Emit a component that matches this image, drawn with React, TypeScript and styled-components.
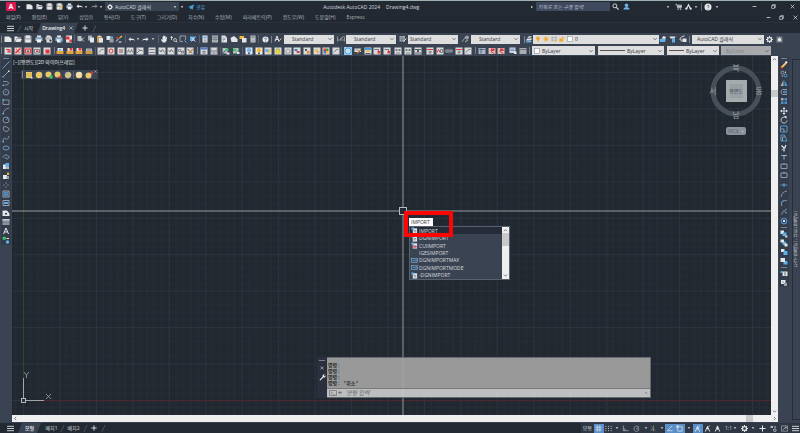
import React from 'react';
import styled, { createGlobalStyle, css } from 'styled-components';

const color = {
  title: '#222933',
  bar: '#3a4352',
  strip: '#333c4a',
  canvas: '#212830',
  text: '#d6dade',
  dim: '#aeb3ba',
  field: '#dedede',
  blue: '#5b8fca',
};

const GlobalStyle = createGlobalStyle`
  * { box-sizing: border-box; }
  html, body { margin: 0; padding: 0; overflow: hidden; background: ${color.title}; }
  body, button, input, select {
    font-family: "Open Sans", "Noto Sans CJK KR", sans-serif;
    font-size: 5px;
    line-height: 8px;
  }
  button, input, select { margin: 0; padding: 0; border: 0; background: none; color: inherit; border-radius: 0; min-width: 0; }
  button { cursor: pointer; }
  svg { display: block; }
`;

/* ---------- icon drawings, all on a 16 x 16 grid ---------- */

const W = '#e4e6e8';
const B = '#5fb0ea';
const R = '#e0383c';
const Y = '#f2ba3a';
const G = '#3fbf6a';
const K = '#555b64';
const GOLD = '#e6c869';

const line = (d: string, stroke = W, width = 1.6) => (
  <path d={d} fill="none" stroke={stroke} strokeWidth={width} />
);
const box = (x: number, y: number, w: number, h: number, fill = W) => (
  <rect x={x} y={y} width={w} height={h} fill={fill} />
);
const tile = (accent: React.ReactNode, fill = '#d9dadb') => (
  <>
    {box(1, 1, 14, 14, fill)}
    {accent}
  </>
);
const folder = <path d="M1 3h5l2 2h6v2H5l-3 7H1zM5 8h11l-3 6H3z" fill={W} />;
const page = <path d="M3 1h7l4 4v10H3z" fill={W} />;
const disk = (
  <>
    <path d="M1 1h12l2 2v12H1z" fill="#a9adb3" />
    {box(4, 1, 8, 5)}
    {box(3, 9, 10, 6)}
  </>
);
const printer = (
  <>
    {box(4, 1, 8, 4)}
    <path d="M1 5h14v7H1z" fill="#b9bdc2" />
    {box(4, 9, 8, 6, '#f4f4f4')}
    {box(3, 6, 10, 2, B)}
  </>
);

const glyphs: Record<string, React.ReactNode> = {
  new: <path d="M1 3h9l5 4v7H1z" fill={W} />,
  open: folder,
  save: disk,
  saveas: <>{disk}{line('M8 13l7-7', Y, 3)}</>,
  print: printer,
  preview: <>{page}{box(1, 4, 11, 6, '#b9bdc2')}<circle cx="11" cy="11" r="3" fill="#333c4a" stroke={W} strokeWidth="1.4" /></>,
  publish: <>{printer}{line('M9 12h6M12 9v6', B, 2)}</>,
  pdf: <>{box(2, 1, 12, 14)}{box(1, 3, 8, 6, R)}{box(9, 9, 5, 5, R)}</>,
  cut: <>{box(1, 2, 8, 10, '#b9bdc2')}{line('M6 5l8 8M14 5l-8 8')}</>,
  copy: <>{box(2, 1, 8, 10, '#a9adb3')}{box(6, 5, 8, 10)}</>,
  paste: <>{box(2, 2, 10, 13, '#c79a55')}{box(6, 6, 8, 9)}{box(5, 1, 4, 3)}</>,
  block: <>{box(1, 2, 8, 8)}{box(7, 7, 8, 8, '#9aa0a8')}{box(9, 3, 5, 4, B)}</>,
  match: <>{line('M2 13l6-6M7 14h6', W, 2)}{line('M9 6l5-4', Y, 3)}{box(2, 4, 4, 3, R)}</>,
  undo: <path d="M6 3v3h5c3 0 4 2 4 6-1-2-2-3-4-3H6v3L1 7.500z" fill={W} />,
  redo: <path d="M10 3v3H5c-3 0-4 2-4 6 1-2 2-3 4-3h5v3l5-4.500z" fill={W} />,
  pan: <path d="M3 8l2 2V3h2v5V1h2v7V2h2v6l1-4h2l-1 8-3 3H6L2 10z" fill={W} />,
  zoomrt: <>{line('M3 2v8M1 5h5')}<circle cx="10" cy="10" r="3" fill="none" stroke={W} strokeWidth="1.400" />{line('M12 12l3 3')}</>,
  zoomwin: <>{line('M2 2h11v8M2 2v11h6', '#aab0b8')}{line('M11 11l4 4', B, 2)}</>,
  zoomprev: <>{box(2, 3, 9, 9, B)}{line('M5 5l8 8M13 3l-8 10')}</>,
  props: <>{box(3, 1, 10, 14)}{box(5, 3, 6, 4, B)}{line('M5 10h6M5 12.500h6', K, 1)}</>,
  center: <>{box(2, 1, 12, 14, '#b9bdc2')}{line('M2 5h12M2 9h12M6 1v14M10 1v14', K, 1)}</>,
  palette: <>{page}{line('M5 6h6M5 9h6M5 12h3', K, 1)}</>,
  sheet: <path d="M1 6l7-4 7 6v6H3z" fill={W} />,
  markup: <>{box(1, 2, 9, 6, Y)}{box(6, 6, 9, 9)}</>,
  calc: <>{box(3, 1, 10, 14, '#c6c9cd')}{box(5, 3, 6, 2, K)}{line('M5 8h6M5 11h6M5 13h6', '#8b9098', 1)}</>,
  help: <><circle cx="8" cy="8" r="7" fill={W} /><path d="M6 6.500C6 3.500 10.500 4 10 6.500 9.600 8 8 8 8 10M8 11.500v1.500" fill="none" stroke={K} strokeWidth="1.600" /></>,
  textstyle: <>{line('M2 13L6 2l4 11M3.500 9h5', W, 2)}{line('M9 13l6-6', '#c7b99a', 2)}</>,
  dimstyle: <>{line('M1 3v10M15 3v10M1 10h14', '#aab0b8', 1.400)}{line('M6 9l7-6', '#c7b99a', 2)}</>,
  tablestyle: <>{box(1, 2, 11, 11, '#aab0b8')}{line('M1 6h11M1 9.500h11M6 2v11', K, 1)}{line('M9 13l6-6', W, 2)}</>,
  mleader: <>{line('M2 14l6-9h6', '#aab0b8')}<circle cx="12" cy="5" r="3" fill="none" stroke={W} strokeWidth="1.400" />{line('M8 14l6-4', '#c7b99a', 2)}</>,
  layers: <><path d="M1 11l4-4h10l-4 4z" fill={W} /><path d="M1 14l4-2h10l-4 3H1z" fill={B} /><path d="M4 6l4-4h6l-3 4z" fill="#b9bdc2" /></>,
  layerset: <><path d="M5 7l4-5 5 2-2 4z" fill={W} /><path d="M1 8h13l-2 6H2z" fill={B} /></>,
  layerprev: <><path d="M1 3h12l-2 4H3z" fill={W} />{box(6, 7, 6, 8, B)}</>,
  layerstate: <>{line('M2 10c0-5 4-8 9-8', W, 2)}{box(7, 7, 8, 7)}{box(3, 9, 4, 4, '#aab0b8')}</>,
  gear: <><circle cx="8" cy="8" r="4.500" fill="none" stroke={W} strokeWidth="3" /><path d="M8 0v3M8 13v3M0 8h3M13 8h3M2.300 2.300l2 2M11.700 11.700l2 2M13.700 2.300l-2 2M4.300 11.700l-2 2" stroke={W} strokeWidth="2.400" /></>,
  wssave: <>{box(1, 1, 14, 14, '#6f7784')}<path d="M4 7l4-4 4 4v5H4z" fill={W} /></>,
  /* second row */
  redtile: tile(<>{line('M4 5h8v7', R, 2)}{box(7, 7, 4, 4, R)}</>),
  redx: tile(<>{line('M3 12L13 3', R, 3)}{line('M4 4l8 8', R, 1.6)}</>, '#e5c6c6'),
  redbox: tile(<>{line('M3 4h10v8H3z', R, 2)}{box(6, 7, 4, 3, K)}</>, '#e9b9b9'),
  cliptile: tile(<>{line('M3 5h10v7H3z', K, 1.400)}{box(6, 7, 5, 3, R)}</>),
  redfill: tile(box(5, 5, 8, 8, R)),
  gold: <>{box(3, 2, 11, 6)}{box(1, 8, 14, 6, '#e2a33a')}{box(6, 4, 5, 3, B)}</>,
  goldred: <>{box(3, 2, 11, 6)}{box(1, 8, 14, 6, '#e2a33a')}{box(7, 2, 6, 5, R)}</>,
  golddark: <>{box(2, 3, 12, 5, '#b9bdc2')}{box(1, 8, 14, 6, '#d09a42')}{line('M4 6h8', K, 1)}</>,
  doc: tile(line('M4 11l5-6M9 5h4', K, 1.400)),
  circ: tile(<circle cx="8" cy="8" r="4" fill="none" stroke={R} strokeWidth="2" />),
  redi: tile(<>{box(5, 4, 2, 8, R)}{box(9, 4, 2, 8, K)}</>),
  aa: tile(<>{line('M3 11l2-6 2 6M9 11l2-6 2 6', K, 1.400)}</>),
  diag: tile(<>{line('M2 12l5-5h6', K, 1.600)}{line('M3 4l5 2', K, 1)}</>),
  dots: tile(<>{line('M3 5h10M3 11h10', K, 2)}{line('M6 3v10M10 3v10', '#d9dadb', 1)}</>),
  wave: tile(line('M3 6l3 4 3-5 4 6', K, 1.600)),
  gridt: tile(<>{line('M3 5h4v4H3zM9 8h4v4H9z', K, 1.400)}</>),
  brush: tile(<>{line('M3 4l9 9', K, 2)}{line('M6 12l8-8', '#d08a45', 3)}</>),
  blue: tile(<>{box(1, 1, 14, 4, '#4d78c4')}{line('M4 9h8M4 12h8M8 6v8', K, 1)}</>),
  frame: tile(<>{line('M2 3v10M14 3v10M4 8h8M5 12h6', K, 1.600)}</>),
  green: <>{box(1, 2, 10, 11, '#b9bdc2')}{line('M2 12L11 3', K, 2)}{box(7, 3, 6, 5, G)}{box(9, 11, 6, 4)}</>,
  green2: <>{box(2, 2, 11, 11, '#b9bdc2')}{box(2, 3, 6, 5, G)}{line('M6 13l8-8', G, 2)}{box(10, 10, 5, 4)}</>,
  bulb: <>{box(1, 1, 14, 14, '#dce9f7')}<circle cx="8" cy="6.500" r="4.500" fill="#7cb5ec" />{box(6, 11, 4, 3, K)}</>,
  bulbon: <>{box(1, 1, 14, 14, '#ecebe4')}<circle cx="8" cy="6.500" r="4.500" fill={Y} />{box(6, 11, 4, 3, K)}</>,
  iso: tile(<>{box(3, 4, 6, 6, B)}{line('M8 12l6-7', Y, 3)}</>),
  lockt: tile(<>{box(3, 7, 10, 6, '#e5cf2c')}{line('M5 7V4h6v3', '#b8a832', 2)}</>),
  unlockt: tile(<>{line('M4 12V6l4-2 4 2v6z', '#8b9098', 1.600)}</>),
  bluered: tile(<>{box(3, 4, 5, 4, '#4d78c4')}{box(8, 8, 5, 4, R)}{line('M8 4v8', K, 1)}</>),
  orange: tile(<>{box(4, 4, 4, 4, K)}{box(8, 8, 5, 5, '#e58a2b')}</>),
  sunt: tile(<><circle cx="7" cy="7" r="3" fill={Y} />{line('M8 12l5-3', '#e58a2b', 2)}</>),
  rgb: tile(<>{box(3, 3, 5, 5, R)}{box(8, 3, 5, 5, '#3d9a55')}{box(3, 8, 5, 5, '#4d78c4')}{box(8, 8, 5, 5, Y)}</>),
  globe: <>{box(0, 0, 16, 16, '#8fc8f2')}<circle cx="8" cy="8" r="6" fill="#bfe0f5" stroke="#3f7fb8" strokeWidth="1.200" /></>,
  pen: <>{box(1, 3, 13, 7)}{line('M6 13l8-8', '#b0793a', 3)}{line('M3 6h6', K, 1.400)}</>,
  flag: tile(<>{box(1, 2, 14, 4, '#4d9ad8')}{box(4, 7, 8, 3, Y)}{line('M3 13h10', K, 2)}</>),
  tagr: tile(<>{line('M3 5h8v7', K, 1.600)}{box(9, 8, 5, 5, R)}</>),
  dimw: tile(<>{line('M2 6h12M5 4v4M11 4v4M4 12h8', K, 1.400)}</>),
  dimc: tile(<>{line('M2 5h12M2 12h12', K, 2)}{box(6, 6, 4, 4, K)}</>),
  redline: tile(<>{line('M2 5h12', R, 2)}{line('M5 10h7M8 7v7', K, 1.400)}</>),
  redab: tile(<>{line('M2 11l3-6 3 6', R, 2)}{line('M9 5h4v6H9z', K, 1.400)}</>),
  dimh: <>{box(1, 5, 14, 6, '#a9adb3')}{line('M8 1v14M4 6v4M12 6v4', K, 2)}</>,
  ref: <>{box(1, 2, 14, 12, '#aab6c8')}{line('M3 5h10M6 3v10', '#40506a', 1.600)}</>,
  refred: <>{box(1, 2, 14, 12, '#d8c0c0')}{box(6, 3, 7, 5, R)}{line('M5 8l8 6', R, 2)}</>,
  blist: <>{box(1, 1, 12, 11, '#ced7e8')}{line('M3 4h8M3 7h8', '#5573b0', 1.400)}{box(10, 9, 5, 5)}</>,
  bwin: <>{box(1, 2, 14, 12, '#a9adb3')}{line('M1 5h14', K, 1.400)}</>,
  /* drawing tools */
  line1: line('M1 15L15 1', '#7eb4e0'),
  line2: <>{line('M3 13L13 3', '#aab0b8')}{box(1, 12, 3, 3, B)}{box(12, 1, 3, 3)}</>,
  pline: <>{line('M2 5h7c5 0 5 7 0 7H5', '#9aa4b2')}{box(1, 11, 3, 3, B)}</>,
  polygon: <>{line('M8 2l6 4.500-2 7H4l-2-7z', '#9aa4b2')}{box(7, 7, 2, 2, B)}</>,
  rect: <>{line('M2 4h12v9H2z', '#9aa4b2')}{box(1, 2, 3, 3, B)}</>,
  arc: <>{line('M2 14C3 7 7 3 14 2', '#9aa4b2')}{box(1, 12, 3, 3, B)}</>,
  circle: <><circle cx="8" cy="8" r="6" fill="none" stroke="#9aa4b2" strokeWidth="1.600" />{line('M8 8l4-4', B)}</>,
  cloud: line('M3 4c4-3 6 1 8 1 5 1 3 8-3 8C4 13 1 7 3 4z', '#aab0b8'),
  spline: <>{line('M2 13C3-3 10 18 14 2', '#9aa4b2')}{box(1, 12, 3, 3, B)}</>,
  ellipse: <ellipse cx="8" cy="8" rx="6" ry="4" fill="none" stroke="#7eaed6" strokeWidth="1.600" />,
  earc: <>{line('M2 9C1 3 13 2 14 8c0 3-3 4-5 4', '#9aa4b2')}{line('M5 10h5', B)}</>,
  insert: <>{box(2, 5, 7, 9)}{box(7, 2, 7, 8, B)}{box(9, 10, 5, 4, '#b9bdc2')}</>,
  make: <>{box(2, 6, 8, 8)}{box(9, 8, 5, 6, '#9aa0a8')}<circle cx="12" cy="3.500" r="2.500" fill={Y} /></>,
  point: <>{box(7, 3, 2, 2, '#aab0b8')}{box(7, 11, 2, 2, '#aab0b8')}{box(3, 7, 2, 2, '#aab0b8')}{box(11, 7, 2, 2, '#aab0b8')}</>,
  hatch: <>{line('M2 2h12v12H2z', '#9aa4b2', 2)}{box(4, 4, 8, 8, '#4f86b4')}</>,
  gradient: <>{line('M2 3h12v10H2z', '#9aa4b2', 2)}{box(4, 6, 8, 4, B)}</>,
  region: <path d="M1 3h9l5 6v5H1zM6 8v3h4V8z" fill={W} fillRule="evenodd" />,
  table: <>{box(1, 2, 14, 12, '#8d939c')}{box(1, 2, 14, 3, '#c3c8ce')}{line('M1 9h14', '#6a717c', 1)}</>,
  mtext: line('M3 14L8 2l5 12M5 10h6', W, 2),
  addsel: <><circle cx="4.500" cy="4.500" r="3.500" fill={G} /><circle cx="11" cy="12" r="3.500" fill={B} />{box(9, 4, 5, 2)}</>,
  /* modify tools */
  erase: <>{line('M3 13L12 4', '#f0c060', 4)}{line('M11 4l3-3', W, 4)}{box(1, 12, 4, 3, R)}</>,
  copyobj: <><circle cx="5" cy="5" r="3" fill="none" stroke="#aab0b8" strokeWidth="1.600" /><circle cx="11" cy="11" r="3" fill="none" stroke={B} strokeWidth="1.600" />{line('M11 3v3M3 12h3', W)}</>,
  mirror: <><path d="M7 2v12H1z" fill="#aab0b8" /><path d="M9 2v12h6z" fill="#4f92cc" /></>,
  offset: <>{line('M14 3H6c-5 0-5 10 0 10h8', '#aab0b8')}{line('M14 6.500H8c-2 0-2 3 0 3h6', B)}</>,
  array: <>{box(2, 2, 5, 5, '#aab0b8')}{box(9, 2, 5, 5, '#4f92cc')}{box(2, 9, 5, 5, '#4f92cc')}{box(9, 9, 5, 5, '#4f92cc')}</>,
  move: <>{line('M8 2v12M2 8h12', W, 1.600)}<path d="M8 0l3 4H5zM8 16l3-4H5zM0 8l4-3v6zM16 8l-4-3v6z" fill={W} /></>,
  rotate: <>{line('M11 3a6 6 0 1 0 3 6', W)}<path d="M8 0h5v6z" fill={W} /></>,
  scale: <>{line('M1 2h13v12H1z', B)}{line('M1 8h7v6', '#aab0b8')}</>,
  stretch: <>{line('M2 14V2h7l5 12z', B)}{line('M5 14V6h5', '#aab0b8')}</>,
  trim: <>{line('M3 3l6 6M12 2l-4 8v5', W, 2.400)}{line('M3 12l9-5', '#aab0b8', 2)}</>,
  extend: <>{line('M2 5h12M8 5v8', '#aab0b8', 2)}{box(2, 4, 4, 2, B)}</>,
  breakpt: <>{line('M2 4h12v9H2z', '#aab0b8')}{box(7, 2, 2, 4, B)}</>,
  breakob: <>{line('M6 4H2v9h12V4h-4', '#aab0b8')}{box(6, 2, 4, 3, B)}</>,
  join: line('M1 8h5M10 8h5M7 5v6M9 5v6', '#69a3d4'),
  chamfer: line('M2 14C3 7 7 3 14 2', '#9aa4b2'),
  fillet: <>{line('M3 14V9c0-4 3-6 11-6', '#9aa4b2')}{line('M3 9c0-4 3-6 6-6', B)}</>,
  blend: <>{line('M2 12c4 3 3-9 7-7 2 1 0 6 5 5', '#9aa4b2')}{line('M10 4l4-2', B)}</>,
  explode: <><circle cx="8" cy="8" r="5.500" fill="none" stroke="#4f92cc" strokeWidth="2.400" />{box(6, 6, 4, 4)}</>,
  front: <>{box(1, 1, 7, 7)}{box(5, 5, 8, 7, B)}{box(10, 11, 5, 4, '#c3c8ce')}</>,
  back: <>{box(5, 5, 7, 7, B)}{box(1, 1, 7, 6)}{box(9, 9, 6, 6)}</>,
  above: <>{box(2, 2, 7, 6)}{box(7, 6, 8, 8, B)}</>,
  under: <>{box(7, 8, 8, 7, B)}{box(1, 2, 9, 8)}</>,
  textf: <>{box(5, 3, 10, 9)}{box(1, 2, 4, 4, B)}{line('M8 6h4M10 6v9', K, 1.400)}</>,
  hatchb: <>{box(2, 2, 9, 8)}{box(8, 8, 6, 6, '#9aa0a8')}{line('M4 4l5 5', K, 1)}</>,
  /* floating toolbar */
  gbox: <>{box(2, 2, 12, 12, GOLD)}{line('M2 6h12M2 10h12', '#c49a3a', 1)}{box(12, 12, 3, 3)}</>,
  gball: <circle cx="8" cy="8" r="6.500" fill={GOLD} />,
  gadd: <><circle cx="7" cy="7" r="6" fill={GOLD} />{line('M8 12h8M12 8v8', G, 3)}</>,
  gsub: <><circle cx="7" cy="7" r="6" fill={GOLD} />{line('M9 12h7', R, 3)}</>,
  gint: <><circle cx="8" cy="8" r="6.500" fill="#a9adb3" />{line('M3 11l8-8M6 14l8-8', GOLD, 3)}</>,
  gpress: <><circle cx="8" cy="8" r="6.500" fill="#f4dd93" />{line('M5 9l6-6', W, 3)}</>,
  gred: <><circle cx="7" cy="9" r="6" fill={GOLD} />{line('M8 9l5-5', W, 2)}{box(11, 1, 5, 5, R)}</>,
  /* title bar and status bar */
  plane: <path d="M0 8L16 1l-4 14-4-4-2 4-1-6z" fill="#4aa3df" />,
  search: <><circle cx="6.500" cy="6.500" r="4.500" fill="none" stroke={W} strokeWidth="2" />{line('M10 10l5 5', W, 2.400)}</>,
  user: <><circle cx="8" cy="5" r="4" fill="#6fb7ea" /><path d="M1 15c0-8 14-8 14 0z" fill="#6fb7ea" /></>,
  cart: <>{line('M1 3h3l2 8h8l1-6H5', W, 1.800)}{box(6, 6, 8, 4, '#c3c8ce')}<circle cx="7" cy="14" r="1.500" fill={W} /><circle cx="13" cy="14" r="1.500" fill={W} /></>,
  apps: <><path d="M8 1l6 12h-3L8 7l-3 6H2z" fill={W} /><circle cx="3" cy="13" r="2.500" fill={W} /><circle cx="13" cy="13" r="2.500" fill={W} /></>,
  min: line('M2 8h12', W, 2.400),
  restore: <>{line('M2 5h9v9H2z', W, 2)}{line('M5 5V2h9v9h-3', W, 2)}</>,
  close: line('M2 2l12 12M14 2L2 14', W, 2.200),
  menu: line('M0 3h16M0 8h16M0 13h16', W, 2),
  plus: line('M8 1v14M1 8h14', W, 2.400),
  caret: <path d="M3 5h10l-5 7z" fill={W} />,
  caretr: <path d="M5 3v10l7-5z" fill={W} />,
  up: line('M3 10l5-5 5 5', K, 2.400),
  down: line('M3 5l5 5 5-5', K, 2.400),
  left: line('M10 3L5 8l5 5', K, 2.400),
  right: line('M6 3l5 5-5 5', K, 2.400),
  wrench: <path d="M1 13l7-7c-1-3 2-6 5-5l-2 3 1 1 3-2c1 4-2 6-5 5l-7 7z" fill={W} />,
  prompt: <>{line('M1 3h14v10H1z', '#6f7377', 1.400)}{line('M4 6l3 2-3 2M8 11h4', '#6f7377', 1.200)}</>,
  grid: line('M5 1v14M11 1v14M1 5h14M1 11h14', W, 1.600),
  snap: <>{[3, 8, 13].map((y) => [2, 8, 14].map((x) => <rect key={`${x}-${y}`} x={x - 1} y={y - 1} width="2" height="2" fill={W} />))}</>,
  ortho: line('M3 1v12h12M3 9h4v4', '#aab0b8', 1.600),
  polar: <>{line('M13 5A6 6 0 1 0 14 10', '#aab0b8')}{line('M8 9h6M8 9l5-6', '#aab0b8')}</>,
  isod: <>{line('M2 2l12 12', R)}{line('M8 1v14', G)}{line('M2 12l6-4', '#aab0b8')}</>,
  track: line('M14 2L3 13h12', W, 1.600),
  osnap: <>{line('M4 4h10v10H4z', W, 1.600)}{box(1, 1, 5, 5)}</>,
  person: <>{line('M3 15L8 3l5 12M8 4v6', W, 2.200)}{line('M10 4l4-3', W, 1.600)}</>,
  figure: line('M3 15L8 2l5 13M8 3v8', W, 2.200),
  nodes: <>{box(1, 2, 6, 5, '#aab0b8')}{box(9, 2, 5, 5, '#6f7784')}<circle cx="11" cy="12" r="3" fill="none" stroke={W} strokeWidth="1.600" /></>,
  clean: <>{line('M1 2h14v12H1z', '#aab0b8', 1.600)}{line('M4 11l8-6M9 5h3v3', W, 1.400)}</>,
  bulbs: <><circle cx="8" cy="6" r="5" fill="#f5a623" />{box(6, 11, 4, 4, '#f5a623')}</>,
  sun: <><circle cx="8" cy="8" r="4" fill="#f5a623" />{line('M8 0v16M0 8h16M2 2l12 12M14 2L2 14', '#f5a623', 1.600)}</>,
  vpf: <>{line('M3 1v14M13 1v14M1 4h14M1 11h14', '#8b9098', 1.400)}{box(10, 10, 5, 5, Y)}</>,
  lockopen: <>{box(1, 7, 10, 8, '#f5a623')}{line('M8 7V3h5v4', '#f5a623', 2)}</>,
  swatch: <rect x="1" y="1" width="14" height="14" fill="#fff" stroke="#8b9098" strokeWidth="1.600" />,
  sysvar: <><rect x="1" y="3" width="14" height="10" fill="#2f4a68" stroke="#8fb4d8" strokeWidth="1.400" />{line('M4 8h3M9 6v4M12 6v4', '#8fc0ea', 1.600)}</>,
  cmd: <>{box(4, 3, 10, 12)}{box(1, 1, 6, 5, B)}{line('M6 8h6M6 11h6', K, 1.200)}</>,
  cmdred: <>{box(4, 3, 10, 12)}{box(1, 1, 6, 5, B)}{box(5, 8, 8, 5, '#c8506a')}</>,
  blank: null,
};

const Svg = styled.svg<{ $size: number }>`
  width: ${(p) => p.$size}px;
  height: ${(p) => p.$size}px;
  flex: none;
`;
const Icon = ({ name, size = 7 }: { name: string; size?: number }) => (
  <Svg $size={size} viewBox="0 0 16 16" aria-hidden="true">{glyphs[name]}</Svg>
);

/* ---------- shared parts ---------- */

const IconButton = styled.button<{ $on?: boolean; $dim?: boolean; $w?: number }>`
  display: flex;
  align-items: center;
  justify-content: center;
  flex: none;
  width: ${(p) => p.$w ?? 8}px;
  height: 9px;
  opacity: ${(p) => (p.$dim ? 0.5 : 1)};
  background: ${(p) => (p.$on ? color.blue : 'transparent')};
`;

const Group = styled.div<{ $w?: number; $ml?: number }>`
  display: flex;
  align-items: center;
  justify-content: space-between;
  flex: none;
  width: ${(p) => (p.$w ? `${p.$w}px` : 'auto')};
  margin-left: ${(p) => p.$ml ?? 0}px;
`;

const Separator = styled.span<{ $ml?: number }>`
  flex: none;
  width: 1px;
  height: 8px;
  margin-left: ${(p) => p.$ml ?? 2}px;
  background: #5a6270;
`;

const Spacer = styled.div`
  flex: 1;
`;

function Tools({ names, w, ml, size }: { names: string; w?: number; ml?: number; size?: number }) {
  return (
    <Group $w={w} $ml={ml}>
      {names.split(' ').map((n, i) => (
        <IconButton key={i} type="button" aria-label={n} $w={n === 'caret' ? 4 : 8}>
          <Icon name={n} size={n === 'caret' ? 4 : size} />
        </IconButton>
      ))}
    </Group>
  );
}

/* ---------- title bar ---------- */

const Shell = styled.div`
  display: flex;
  flex-direction: column;
  height: 100vh;
  border-top: 1px solid #9fb0b0;
  background: ${color.title};
  color: ${color.text};
  white-space: nowrap;
`;

const TitleBar = styled.header`
  display: flex;
  align-items: center;
  height: 11px;
  padding-left: 6px;
  flex: none;
`;

const Logo = styled.button`
  display: flex;
  align-items: center;
  justify-content: center;
  width: 10px;
  height: 9px;
  border-radius: 1px;
  background: #d91a50;
  color: #fff;
  font-size: 7px;
  font-weight: 700;
`;

const SelectBox = styled.label<{ $dark?: boolean; $ml?: number; $w?: number; $off?: boolean }>`
  display: flex;
  align-items: center;
  gap: 2px;
  flex: none;
  width: ${(p) => p.$w}px;
  height: 9px;
  margin-left: ${(p) => p.$ml ?? 2}px;
  padding: 0 2px;
  background: ${(p) => (p.$dark ? color.bar : p.$off ? '#a7a9ac' : color.field)};
  color: ${(p) => (p.$dark ? color.text : p.$off ? '#7d8187' : '#33373d')};

  select {
    flex: 1;
    height: 9px;
    line-height: 8px;
    appearance: none;
    opacity: 1;
    outline: none;
  }
`;

const Chevron = styled.svg`
  width: 4px;
  height: 4px;
  flex: none;
  fill: none;
  stroke: #5b5f66;
  stroke-width: 2;
`;

const LinePreview = styled.span<{ $long?: boolean }>`
  width: ${(p) => (p.$long ? 25 : 15)}px;
  height: 1px;
  background: #555;
  flex: none;
`;

const Indent = styled.span<{ $w: number }>`
  width: ${(p) => p.$w}px;
  flex: none;
`;

interface DropProps {
  label: string;
  value: string;
  w: number;
  ml?: number;
  off?: boolean;
  indent?: number;
  children?: React.ReactNode;
}
const Drop = ({ label, value, w, ml, off, indent, children }: DropProps) => (
  <SelectBox $w={w} $ml={ml} $off={off}>
    {children}
    {indent ? <Indent $w={indent} /> : null}
    <select aria-label={label} disabled={off}>
      <option>{value}</option>
    </select>
    <Chevron viewBox="0 0 10 10"><path d="M1 3l4 4 4-4" /></Chevron>
  </SelectBox>
);

const ShareButton = styled.button`
  display: flex;
  align-items: center;
  gap: 2px;
  margin-left: 4px;
  color: #5cb4ee;
`;

const WindowTitle = styled.h1`
  display: flex;
  gap: 6px;
  margin: 0 0 0 118px;
  font-size: 5px;
  font-weight: 400;
  line-height: 8px;
`;

const SearchField = styled.input`
  width: 74px;
  height: 9px;
  padding: 0 2px;
  background: #3f495e;
  font-style: italic;
  &::placeholder { color: #b9bfca; opacity: 1; }
`;

const MenuBar = styled.nav`
  display: flex;
  align-items: center;
  gap: 11px;
  height: 10px;
  padding: 0 1px 0 6px;
  flex: none;
  color: ${color.dim};
`;

const TabBar = styled.div`
  display: flex;
  align-items: center;
  height: 11px;
  padding-left: 6px;
  border-top: 1px solid #2b323d;
  flex: none;
`;

const Slash = styled.span<{ $ml?: number }>`
  width: 1px;
  height: 7px;
  margin-left: ${(p) => p.$ml ?? 5}px;
  background: #4a515c;
  transform: skewX(-25deg);
`;

const DocTab = styled.button`
  display: flex;
  align-items: center;
  justify-content: center;
  gap: 4px;
  width: 41px;
  height: 10px;
  margin-left: 4px;
  background: ${color.bar};
  clip-path: polygon(4px 0, 100% 0, calc(100% - 4px) 100%, 0 100%);
  font-weight: 600;
  color: #eceef0;
`;

const PlainTab = styled.button<{ $ml?: number }>`
  margin-left: ${(p) => p.$ml ?? 4}px;
`;

const ToolBar = styled.div<{ $h?: number }>`
  display: flex;
  align-items: center;
  height: ${(p) => p.$h ?? 11}px;
  flex: none;
  background: ${color.bar};
  overflow: hidden;
`;

const Grip = styled.span<{ $ml?: number }>`
  flex: none;
  width: 1px;
  height: 7px;
  margin-left: ${(p) => p.$ml ?? 2}px;
  background: #7a828e;
`;

/* ---------- work area ---------- */

const Work = styled.main`
  display: flex;
  flex: 1;
  min-height: 0;
  background: ${color.bar};
`;

const SideBar = styled.aside`
  width: 12px;
  padding: 1px 1px 0;
  flex: none;
`;

const SideTools = styled.div`
  display: flex;
  flex-direction: column;
  align-items: center;
  background: ${color.strip};
`;

const SideGroup = styled.div<{ $h: number }>`
  display: flex;
  flex-direction: column;
  justify-content: space-between;
  height: ${(p) => p.$h}px;
`;

const SideGrip = styled.span`
  width: 6px;
  height: 1px;
  margin: 1px 0;
  background: #7a828e;
`;

const DrawingColumn = styled.div`
  display: flex;
  flex-direction: column;
  flex: 1;
  min-width: 0;
`;

const DrawingRow = styled.div`
  display: flex;
  flex: 1;
  min-height: 0;
`;

const Canvas = styled.section`
  position: relative;
  flex: 1;
  min-width: 0;
  background: ${color.canvas};
  overflow: hidden;
`;

const Sheet = styled.svg`
  width: 100%;
  height: 100%;
`;

const ViewLabel = styled.div`
  position: absolute;
  left: 1px;
  top: 2px;
  font-family: "Noto Sans CJK KR", sans-serif;
  color: #e4e6e8;
`;

const Floating = styled.div`
  position: absolute;
  left: 9px;
  top: 14px;
  display: flex;
  align-items: center;
  height: 9px;
  width: 77px;
  background: ${color.bar};
`;

const CloseMark = styled.span`
  align-self: flex-start;
  margin-left: 1px;
`;

const ViewCube = styled.div`
  position: absolute;
  right: 5px;
  top: 5px;
  width: 60px;
`;

const CubeDrawing = styled.svg`
  width: 60px;
  height: 60px;
  font-size: 8px;
  font-family: "Noto Sans CJK KR", sans-serif;
  text-anchor: middle;
`;

const Wcs = styled.button`
  display: flex;
  align-items: center;
  justify-content: space-between;
  width: 20px;
  height: 8px;
  margin: 6px 0 0 20px;
  padding: 0 2px;
  border-radius: 2px;
  background: #8a909c;
  color: #5c626e;
`;

const Prompt = styled.div`
  position: absolute;
  left: 397px;
  top: 162px;
`;

const PromptInput = styled.input`
  display: block;
  width: 24px;
  height: 8px;
  padding: 0 2px;
  background: #fff;
  color: #333;
  outline: none;
`;

const Suggest = styled.div`
  display: flex;
  width: 101px;
  height: 54px;
  border: 1px solid #59616e;
`;

const SuggestList = styled.ul`
  display: flex;
  flex-direction: column;
  flex: 1;
  margin: 0;
  padding: 0;
  list-style: none;
  background: ${color.bar};
`;

const SuggestItem = styled.li<{ $on?: boolean }>`
  display: flex;
  align-items: center;
  gap: 1px;
  flex: 1;
  min-height: 0;
  padding-left: 1px;
  background: ${(p) => (p.$on ? '#252c37' : 'transparent')};
`;

const Scroll = styled.div<{ $row?: boolean }>`
  display: flex;
  flex: none;
  align-items: center;
  justify-content: space-between;
  flex-direction: ${(p) => (p.$row ? 'row' : 'column')};
  ${(p) => (p.$row ? css`height: 7px; padding: 0 1px;` : css`width: 7px; padding: 1px 0;`)}
  background: #efefef;
`;

const Thumb = styled.span<{ $h: number; $gap: string }>`
  width: 7px;
  height: ${(p) => p.$h}px;
  margin: ${(p) => p.$gap};
  background: #c9c9c9;
`;

const Highlight = styled.div`
  position: absolute;
  left: -5px;
  top: -7px;
  width: 49px;
  height: 26px;
  border: 4px solid #fb0505;
`;

const Command = styled.div`
  position: absolute;
  left: 305px;
  right: 120px;
  bottom: 17px;
  display: flex;
`;

const CommandSide = styled.div`
  display: flex;
  flex-direction: column;
  align-items: center;
  gap: 4px;
  width: 10px;
  padding-top: 2px;
  background: #2b303f;
`;

const CommandBody = styled.div`
  flex: 1;
  border: 1px solid rgba(110, 113, 116, 0.9);
  border-left: 0;
`;

const History = styled.div`
  padding: 5px 1px 1px;
  background: rgba(168, 168, 166, 0.88);
  color: #1d2024;
  font-family: "Liberation Mono", "Noto Sans CJK KR", monospace;
  font-weight: 500;
  line-height: 6px;
`;

const CommandLine = styled.label`
  display: flex;
  align-items: center;
  height: 9px;
  padding: 0 2px;
  gap: 1px;
  border-top: 1px solid #77797b;
  background: rgba(203, 204, 204, 0.92);

  input {
    flex: 1;
    margin-left: 3px;
    font-style: italic;
    font-size: 6px;
    outline: none;
  }
  input::placeholder { color: #6a6c70; opacity: 1; }
`;

const Palette = styled.aside`
  display: flex;
  align-items: center;
  justify-content: flex-end;
  width: 8px;
  margin: 3px 0 2px 2px;
  border: 1px solid #272e39;
  border-right: 0;
  overflow: hidden;
`;

const PaletteTitle = styled.span`
  writing-mode: vertical-rl;
  transform: rotate(180deg);
  color: #c6cad0;
`;

const StatusBar = styled.footer`
  display: flex;
  align-items: center;
  justify-content: space-between;
  height: 11px;
  padding-left: 6px;
  border-top: 1px solid #39414e;
  flex: none;
`;

const StatusTools = styled.div`
  display: flex;
  align-items: center;
  height: 10px;
  padding-left: 1px;
  background: #2f3744;
`;

const LayoutTab = styled.button<{ $on?: boolean }>`
  width: ${(p) => (p.$on ? 23 : 21)}px;
  height: 10px;
  background: ${(p) => (p.$on ? color.bar : 'transparent')};
  clip-path: polygon(4px 0, 100% 0, calc(100% - 4px) 100%, 0 100%);
  font-weight: ${(p) => (p.$on ? 700 : 400)};
`;

const menus = ['파일(F)', '편집(E)', '뷰(V)', '삽입(I)', '형식(O)', '도구(T)', '그리기(D)', '치수(N)', '수정(M)', '파라메트릭(P)', '윈도우(W)', '도움말(H)', 'Express'];

const suggestions = [
  ['cmd', 'IMPORT'],
  ['cmd', 'DGNIMPORT'],
  ['cmdred', 'CUIIMPORT'],
  ['blank', 'IGESIMPORT'],
  ['sysvar', 'DGNIMPORTMAX'],
  ['sysvar', 'DGNIMPORTMODE'],
  ['cmd', '-DGNIMPORT'],
];

const drawTools = ['line1', 'line2', 'pline', 'polygon', 'rect', 'arc', 'circle', 'cloud', 'spline', 'ellipse', 'earc', 'insert', 'make', 'point', 'hatch', 'gradient', 'region', 'table', 'mtext', 'addsel'];
const modifyTools = ['erase', 'copyobj', 'mirror', 'offset', 'array', 'move', 'rotate', 'scale', 'stretch', 'trim', 'extend', 'breakpt', 'breakob', 'join', 'chamfer', 'fillet', 'blend', 'explode'];
const orderTools = ['front', 'back', 'above', 'under'];

/* status entries: icon, width, highlighted */
const statusTools: [string, number, boolean?][] = [
  ['grid', 10, true], ['snap', 10], ['caret', 7], ['ortho', 10], ['polar', 12], ['caret', 6], ['isod', 10], ['caret', 6],
  ['track', 10, true], ['osnap', 10, true], ['caret', 8], ['person', 10, true], ['person', 10], ['figure', 10],
];

const Vertical = ({ names, h }: { names: string[]; h: number }) => (
  <SideGroup $h={h}>
    {names.map((n) => (
      <IconButton key={n} type="button" aria-label={n}><Icon name={n} size={8} /></IconButton>
    ))}
  </SideGroup>
);

const DrawingSheet = () => (
  <Sheet>
    <defs>
      <pattern id="grid" x="11" y="344" width="36.45" height="36.45" patternUnits="userSpaceOnUse">
        <path d="M7.300 0v36.450M14.600 0v36.450M21.900 0v36.450M29.200 0v36.450M0 7.300h36.450M0 14.600h36.450M0 21.900h36.450M0 29.200h36.450" stroke="#252c37" strokeWidth="1" />
        <path d="M0.500 0v36.450M0 0.500h36.450" stroke="#2c3441" strokeWidth="1" />
      </pattern>
    </defs>
    <rect width="100%" height="100%" fill="url(#grid)" />
    <path d="M11.500 0v322" stroke="#28492f" />
    <path d="M32 344.500h2000" stroke="#4f272e" />
    <path d="M11.500 322v20M14 344.500h18" stroke="#a2a6aa" />
    <rect x="9.500" y="342.500" width="4" height="4" fill="none" stroke="#b5b8bb" />
    <path d="M12 316l2.500 3 2.500-3M14.500 319v3M34 338l5 5M39 338l-5 5" fill="none" stroke="#a2a6aa" strokeWidth="0.800" />
    <path d="M391 0v151M391 158v2000M0 155h387M395 155h2000" stroke="#95989b" />
    <rect x="387.500" y="151.500" width="7" height="7" fill="none" stroke="#b9bbbd" />
  </Sheet>
);

export default function App() {
  return (
    <Shell>
      <GlobalStyle />
      <TitleBar>
        <Logo type="button">A</Logo>
        <Tools names="caret" ml={1} />
        <Tools names="new open save saveas print" w={48} ml={4} />
        <Tools names="undo caret" w={13} ml={2} />
        <Group $ml={2}>
          <IconButton type="button" aria-label="redo" $dim><Icon name="redo" /></IconButton>
        </Group>
        <Tools names="caret" ml={1} />
        <SelectBox $dark $w={74} $ml={2}>
          <Icon name="gear" size={6} />
          <select aria-label="Workspace"><option>AutoCAD 클래식</option></select>
          <Icon name="caret" size={4} />
        </SelectBox>
        <Tools names="caret" ml={1} />
        <ShareButton type="button"><Icon name="plane" size={6} />공유</ShareButton>
        <WindowTitle><span>Autodesk AutoCAD 2024</span><span>Drawing4.dwg</span></WindowTitle>
        <Spacer />
        <Tools names="caretr" size={4} />
        <SearchField aria-label="Search" placeholder="키워드 또는 구절 입력" />
        <Tools names="search user" w={19} ml={1} />
        <Tools names="caret cart" w={16} ml={36} />
        <Tools names="apps caret" w={14} ml={2} />
        <Separator $ml={3} />
        <Tools names="help caret" w={15} ml={2} size={8} />
        <Tools names="min restore close" w={46} ml={31} size={5} />
        <Indent $w={4} />
      </TitleBar>
      <MenuBar>
        {menus.map((m) => <button key={m} type="button">{m}</button>)}
        <Spacer />
        <Tools names="min restore close" w={35} size={5} />
      </MenuBar>
      <TabBar>
        <Tools names="menu" />
        <Slash />
        <PlainTab type="button">시작</PlainTab>
        <DocTab type="button">Drawing4<Icon name="close" size={4} /></DocTab>
        <Tools names="plus" ml={3} size={6} />
        <Slash />
      </TabBar>

      <ToolBar $h={12}>
        <Grip $ml={1} />
        <Tools names="new open save" w={28} ml={2} size={8} />
        <Tools names="print preview publish pdf" w={38} ml={3} size={8} />
        <Separator $ml={1} />
        <Tools names="cut copy paste block match" w={46} ml={2} size={8} />
        <Separator />
        <Tools names="undo caret redo caret" w={28} ml={1} />
        <Separator $ml={3} />
        <Tools names="pan zoomrt zoomwin zoomprev" w={37} ml={1} size={8} />
        <Separator />
        <Tools names="props center palette sheet markup calc" w={56} ml={1} size={8} />
        <Separator $ml={1} />
        <Tools names="help" ml={2} />
        <Grip />
        <Tools names="textstyle" ml={2} size={8} />
        <Drop label="Text style" value="Standard" w={50} indent={4} />
        <Tools names="dimstyle" ml={3} size={8} />
        <Drop label="Dimension style" value="Standard" w={50} indent={4} ml={1} />
        <Tools names="tablestyle" ml={3} size={8} />
        <Drop label="Table style" value="Standard" w={50} ml={1} />
        <Tools names="mleader" ml={3} size={8} />
        <Drop label="Multileader style" value="Standard" w={49} indent={4} />
        <Grip $ml={4} />
        <Tools names="layers" size={8} />
        <Drop label="Layer" value="0" w={126} ml={0}>
          <Icon name="bulbs" size={6} /><Icon name="sun" size={6} /><Icon name="vpf" size={6} /><Icon name="lockopen" size={6} /><Icon name="swatch" size={6} />
        </Drop>
        <Tools names="layerset layerprev layerstate" w={28} size={8} />
        <Grip />
        <Drop label="Workspace list" value="AutoCAD 클래식" w={72} indent={1} />
        <Tools names="gear wssave" w={18} ml={1} />
      </ToolBar>

      <ToolBar>
        <Grip $ml={1} />
        <Tools names="redtile redx redbox cliptile redfill" w={47} ml={2} size={8} />
        <Grip $ml={3} />
        <Tools names="gold goldred goldred golddark" w={37} ml={1} size={8} />
        <Separator />
        <Tools names="doc circ redi aa diag" w={47} ml={1} size={8} />
        <Tools names="dots wave wave gridt brush" w={46} ml={4} size={8} />
        <Grip $ml={3} />
        <Tools names="blue frame" w={18} ml={2} size={8} />
        <Separator />
        <Tools names="green green2" w={18} ml={1} size={8} />
        <Separator />
        <Tools names="bulb bulbon iso lockt unlockt bluered orange sunt rgb doc" w={95} ml={2} size={8} />
        <Separator $ml={1} />
        <Tools names="globe pen flag tagr tagr" w={47} ml={2} size={8} />
        <Tools names="dimw dimw dimc" w={28} ml={3} size={8} />
        <Tools names="redline redab dimh redline doc" w={46} ml={4} size={8} />
        <Grip $ml={3} />
        <Tools names="ref refred refred" w={27} ml={2} size={8} />
        <Tools names="blist bwin" w={18} ml={4} size={8} />
        <Grip />
        <Drop label="Object color" value="ByLayer" w={63}><Icon name="swatch" size={6} /></Drop>
        <Drop label="Linetype" value="ByLayer" w={66} ml={3}><LinePreview $long /></Drop>
        <Drop label="Lineweight" value="ByLayer" w={52} ml={3}><LinePreview /></Drop>
        <Drop label="Plot style" value="ByColor" w={50} indent={1} off />
      </ToolBar>

      <Work>
        <SideBar>
          <SideTools>
            <SideGrip />
            <Vertical names={drawTools} h={185} />
          </SideTools>
        </SideBar>
        <DrawingColumn>
          <DrawingRow>
            <Canvas>
              <DrawingSheet />
              <ViewLabel>[−][평면도][2D 와이어프레임]</ViewLabel>
              <Floating>
                <Grip $ml={1} />
                <Tools names="gbox gball gadd gsub gint" w={47} ml={2} size={8} />
                <Separator $ml={1} />
                <Tools names="gpress gred" w={18} ml={1} size={8} />
                <CloseMark><Icon name="close" size={3} /></CloseMark>
              </Floating>
              <ViewCube>
                <CubeDrawing viewBox="0 0 60 60">
                  <circle cx="30" cy="30" r="23" fill="none" stroke="#484f58" strokeWidth="5" />
                  <rect x="20" y="19" width="21" height="22" fill="#a6abae" />
                  <rect x="24" y="23" width="13" height="14" fill="#98a0a6" />
                  <g fill="#9ba0a6">
                    <text x="30" y="10">북</text>
                    <text x="53" y="33">동</text>
                    <text x="30" y="57">남</text>
                    <text x="7" y="33">서</text>
                  </g>
                  <text x="30" y="32" fontSize="5" fill="#43494e">평면도</text>
                </CubeDrawing>
                <Wcs type="button">WCS<Icon name="caret" size={3} /></Wcs>
              </ViewCube>
              <Prompt>
                <PromptInput aria-label="Command input" defaultValue="IMPORT" />
                <Suggest>
                  <SuggestList>
                    {suggestions.map(([icon, text], i) => (
                      <SuggestItem key={text} $on={i === 0}><Icon name={icon} />{text}</SuggestItem>
                    ))}
                  </SuggestList>
                  <Scroll>
                    <Icon name="up" size={5} />
                    <Thumb $h={13} $gap="0 0 auto" />
                    <Icon name="down" size={5} />
                  </Scroll>
                </Suggest>
                <Highlight />
              </Prompt>
              <Command>
                <CommandSide>
                  <SideGrip />
                  <Icon name="close" size={4} />
                  <Icon name="wrench" size={7} />
                </CommandSide>
                <CommandBody>
                  <History>
                    <div>명령:</div>
                    <div>명령:</div>
                    <div>명령:</div>
                    <div>명령: *취소*</div>
                  </History>
                  <CommandLine>
                    <Icon name="prompt" size={8} />
                    <Chevron viewBox="0 0 10 10"><path d="M1 3h8l-4 4z" /></Chevron>
                    <input aria-label="Command line" placeholder="명령 입력" />
                    <Icon name="up" size={4} />
                  </CommandLine>
                </CommandBody>
              </Command>
            </Canvas>
            <Scroll>
              <Icon name="up" size={5} />
              <Thumb $h={7} $gap="28px 0 auto" />
              <Icon name="down" size={5} />
            </Scroll>
          </DrawingRow>
          <Scroll $row>
            <Icon name="left" size={5} />
            <Thumb $h={7} $gap="0 19px 0 auto" />
            <Icon name="right" size={5} />
          </Scroll>
        </DrawingColumn>
        <SideBar>
          <SideTools>
            <SideGrip />
            <Vertical names={modifyTools} h={166} />
            <SideGrip />
            <Vertical names={orderTools} h={37} />
            <SideGrip />
            <Vertical names={['textf', 'hatchb']} h={18} />
          </SideTools>
        </SideBar>
        <Palette><PaletteTitle>도구 팔레트 - 모든 팔레트</PaletteTitle></Palette>
      </Work>

      <StatusBar>
        <Group>
          <Tools names="menu" />
          <Indent $w={4} />
          <LayoutTab type="button" $on>모형</LayoutTab>
          <LayoutTab type="button">배치1</LayoutTab>
          <Slash $ml={0} />
          <LayoutTab type="button">배치2</LayoutTab>
          <Slash $ml={1} />
          <Tools names="plus" ml={4} size={6} />
          <Slash />
        </Group>
        <StatusTools>
          <PlainTab type="button" $ml={1}>모형</PlainTab>
          <Indent $w={2} />
          {statusTools.map(([n, w, on], i) => (
            <IconButton key={i} type="button" aria-label={n} $w={w} $on={on}>
              <Icon name={n} size={n === 'caret' ? 4 : 7} />
            </IconButton>
          ))}
          <PlainTab type="button" $ml={2}>1:1</PlainTab>
          <Tools names="caret" ml={1} />
          <Tools names="gear caret" w={15} ml={3} />
          <Tools names="plus nodes clean menu" w={42} ml={3} />
        </StatusTools>
      </StatusBar>
    </Shell>
  );
}
